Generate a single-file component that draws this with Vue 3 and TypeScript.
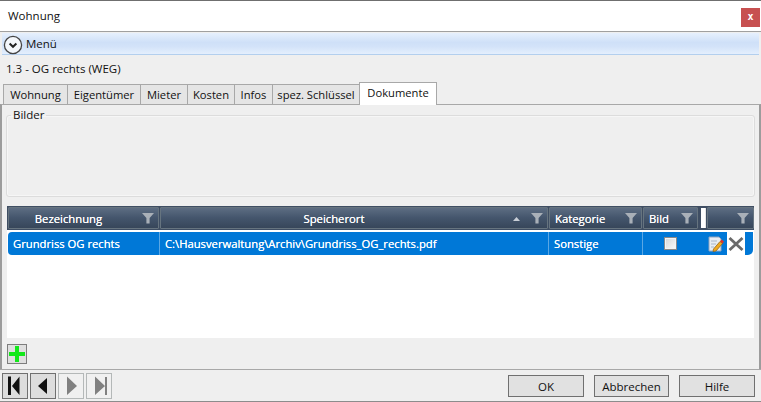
<script setup lang="ts">
const tabs: string[] = ['Wohnung', 'Eigentümer', 'Mieter', 'Kosten', 'Infos', 'spez. Schlüssel']
const tabWidths: number[] = [65, 74, 48, 48, 39, 88]
interface Col { label: string; width: number; pad: number; sort?: boolean }
const cols: Col[] = [
  { label: 'Bezeichnung', width: 151, pad: 30 },
  { label: 'Speicherort', width: 388, pad: 40, sort: true },
  { label: 'Kategorie', width: 93, pad: 0 },
  { label: 'Bild', width: 55, pad: 0 },
]
</script>

<template>
  <div class="win">
    <div class="title">
      <span>Wohnung</span>
      <div class="close">x</div>
    </div>
    <div class="body">
      <div class="menu">
        <svg class="chev" width="20" height="20" viewBox="0 0 20 20">
          <circle cx="10" cy="10" r="8.6" fill="#f4f7fb" stroke="#444" stroke-width="1.3" />
          <path d="M6.6 8.6 L10 11.8 L13.4 8.6" fill="none" stroke="#222" stroke-width="2" />
        </svg>
        <span>Menü</span>
      </div>
      <div class="sub">1.3 - OG rechts (WEG)</div>
      <div class="tabs">
        <div v-for="(t, i) in tabs" :key="t" class="tab" :style="{ width: tabWidths[i] + 'px' }">{{ t }}</div>
        <div class="tab active">Dokumente</div>
      </div>
      <div class="panel">
        <fieldset class="group">
          <legend>Bilder</legend>
        </fieldset>
        <div class="grid">
          <div class="head">
            <div v-for="c in cols" :key="c.label" class="hcell" :class="{ center: c.pad > 0 }" :style="{ width: c.width + 'px', paddingRight: c.pad + 'px' }">
              <span class="hlabel">{{ c.label }}</span>
              <svg v-if="c.sort" class="sort" width="7" height="4" viewBox="0 0 7 4"><path d="M3.5 0 L7 4 H0 Z" fill="#c8ced6" /></svg>
              <svg class="funnel" width="12" height="12" viewBox="0 0 12 12"><path d="M0 1 H12 L7.6 6 V11.5 H4.4 V6 Z" fill="#a9b0b8" /></svg>
            </div>
            <div class="split"></div>
            <div class="hcell last">
              <svg class="funnel" width="12" height="12" viewBox="0 0 12 12"><path d="M0 1 H12 L7.6 6 V11.5 H4.4 V6 Z" fill="#a9b0b8" /></svg>
            </div>
          </div>
          <div class="row">
            <div class="cell c1">Grundriss OG rechts</div>
            <div class="cell c2">C:\Hausverwaltung\Archiv\Grundriss_OG_rechts.pdf</div>
            <div class="cell c3">Sonstige</div>
            <div class="cell c4"><span class="check"></span></div>
            <div class="c5">
              <svg class="edit" width="18" height="18" viewBox="0 0 18 18">
                <path d="M2 2 H12 L14 4 V16 H2 Z" fill="#e8edf4" stroke="#8fa3bd" />
                <path d="M4 6 H10 M4 9 H9 M4 12 H7" stroke="#a9b8cb" />
                <path d="M6.5 14 L13 6.5 L15.5 8.5 L9 16 L6 16.5 Z" fill="#efaa22" stroke="#8a5a0c" stroke-width=".7" />
                <path d="M13 6.5 L14.5 4.5 L17 6.5 L15.5 8.5 Z" fill="#d9342b" />
              </svg>
              <div class="del">
                <svg width="18" height="18" viewBox="0 0 18 18"><path d="M2.5 3 L15.5 15 M15.5 3 L2.5 15" stroke="#6a6a6a" stroke-width="2.8" /></svg>
              </div>
            </div>
          </div>
          <div class="empty"></div>
        </div>
        <div class="addrow">
          <div class="add">
            <svg width="16" height="16" viewBox="0 0 16 16"><path d="M6 0 H10 V6 H16 V10 H10 V16 H6 V10 H0 V6 H6 Z" fill="#12e81a" /></svg>
          </div>
        </div>
      </div>
      <div class="foot">
        <div class="nav">
          <div class="nb">
            <svg width="20" height="20" viewBox="0 0 20 20"><path d="M3 0.5 H6 V19 H3 Z M14.5 0.5 V19 L7 10 Z" fill="#111" /></svg>
          </div>
          <div class="nb">
            <svg width="20" height="20" viewBox="0 0 20 20"><path d="M14 2 V18 L5 10 Z" fill="#111" /></svg>
          </div>
          <div class="nb off">
            <svg width="20" height="20" viewBox="0 0 20 20"><path d="M6 0.5 V19 L16 10 Z" fill="#808080" /></svg>
          </div>
          <div class="nb off">
            <svg width="20" height="20" viewBox="0 0 20 20"><path d="M6 0.5 V19 L16 10 Z M16 1 H18 V19 H16 Z" fill="#808080" /></svg>
          </div>
        </div>
        <div class="btns">
          <div class="btn b1">OK</div>
          <div class="btn b2">Abbrechen</div>
          <div class="btn b3">Hilfe</div>
        </div>
      </div>
    </div>
  </div>
</template>

<style>
html, body { margin: 0; padding: 0; background: #fff; overflow: hidden; }
</style>

<style scoped>
.win {
  width: 761px; height: 402px; box-sizing: border-box;
  border-top: 1px solid #6f6f6f;
  display: flex; flex-direction: column;
  font-family: "Open Sans", "Noto Sans", sans-serif; font-size: 11.5px; color: #111;
  background: #fff; overflow: hidden;
}
.title { height: 30px; flex: none; display: flex; align-items: center; justify-content: space-between; padding: 0 1px 2px 8px; box-sizing: border-box; }
.close {
  width: 19px; height: 19px; align-self: flex-start; margin-top: 7px; background: #c75050; color: #fff;
  font: bold 10px "DejaVu Sans Mono", monospace; display: flex; align-items: center; justify-content: center;
  box-sizing: border-box; padding-bottom: 2px;
}
.body {
  flex: 1; min-height: 0; display: flex; flex-direction: column; background: #efefef;
  border-top: 1px solid #a0a0a0; border-bottom: 1px solid #8c8c8c;
}
.menu {
  height: 21px; flex: none; margin: 1px 2px 0 2px;
  background: linear-gradient(#e6f0fd, #cfe0f8 45%, #d3e3f9 65%, #e4effd);
  border-bottom: 1px solid #b3cfee; display: flex; align-items: center; gap: 3px; padding-left: 1px;
}
.chev { margin-top: 2px; flex: none; }
.sub { height: 27px; flex: none; display: flex; align-items: center; padding-left: 6px; box-sizing: border-box; }
.tabs { height: 22px; flex: none; display: flex; padding-left: 3px; box-sizing: border-box; font-size: 11.2px; }
.tab {
  margin-top: 2px; height: 20px; box-sizing: border-box;
  background: #e5e5e5; border: 1px solid #a8a8a8; border-bottom: 0;
  display: flex; align-items: center; justify-content: center; white-space: nowrap;
  margin-left: -1px;
}
.tab:first-child { margin-left: 0; }
.tab.active {
  margin-top: 0; height: 23px; width: 78px; background: #fff; position: relative; z-index: 1; padding-bottom: 3px;
}
.panel {
  flex: none; height: 265px; box-sizing: border-box; display: flex; flex-direction: column;
  border-top: 1px solid #a8a8a8; border-left: 2px solid #9c9c9c; border-right: 2px solid #9c9c9c;
  padding: 0 5px 0 5px;
}
.group {
  height: 89px; flex: none; margin: 3px -1px 0 -1px; padding: 0; box-sizing: border-box;
  border: 1px solid #dcdcdc; border-radius: 3px; box-shadow: inset 0 0 0 1px #f6f6f6;
}
.group legend { margin-left: 4px; padding: 0 2px; line-height: 14px; }
.grid { height: 132px; flex: none; margin-top: 9px; background: #fff; display: flex; flex-direction: column; }
.head { height: 24px; flex: none; display: flex; background: #3f4e63; padding-left: 1px; box-sizing: border-box; }
.hcell {
  height: 22px; margin-top: 1px; box-sizing: border-box; flex: none; margin-right: 1px;
  background: linear-gradient(#5d6d82, #44556c 50%, #37465a);
  border: 1px solid #66747f; border-radius: 1px;
  color: #fff; display: flex; align-items: center; position: relative; padding-left: 5px; font-size: 11.3px;
}
.hcell.center { justify-content: center; padding-left: 0; }
.hlabel { text-shadow: 0 0 .6px #fff; }
.hcell.last { width: 47px; margin-left: 1px; margin-right: 0; }
.funnel { position: absolute; right: 4px; top: 4px; }
.sort { position: absolute; right: 27px; top: 9px; }
.split { width: 5px; margin-left: 2px; background: linear-gradient(90deg, #fff 0 4px, #e6e6e6 4px); height: 20px; margin-top: 2px; flex: none; }
.row { height: 23px; flex: none; display: flex; margin: 2px 1px 0 1px; background: #0078d7; color: #fff; border-radius: 4px 0 5px 4px; font-size: 11.25px; text-shadow: 0 0 .5px #fff; }
.cell { height: 100%; display: flex; align-items: center; box-sizing: border-box; padding-left: 5px; border-right: 1px solid #5aa7e4; flex: none; }
.c1 { width: 152px; }
.c2 { width: 389px; }
.c3 { width: 94px; }
.c4 { width: 57px; justify-content: center; padding: 0 2px 0 0; border-right: 0; }
.check { width: 13px; height: 13px; box-sizing: border-box; border: 1px solid #8a8a8a; background: linear-gradient(135deg, #d6d6d6, #fbfbfb); box-shadow: inset 0 0 0 1px #f4f4f4; display: block; }
.c5 { margin-left: 7px; display: flex; align-items: center; }
.edit { flex: none; margin-right: 2px; }
.del { width: 18px; height: 23px; background: #fff; display: flex; align-items: center; justify-content: center; }
.empty { flex: 1; }
.addrow { flex: 1; display: flex; align-items: flex-start; padding-top: 6px; box-sizing: border-box; }
.add { width: 20px; height: 20px; box-sizing: border-box; border: 1px solid #7d7d7d; background: #dfdfdf; display: flex; align-items: center; justify-content: center; }
.foot { flex: 1; min-height: 0; display: flex; justify-content: space-between; border-top: 1px solid #a8a8a8; padding: 3px 6px 0 2px; }
.nav { display: flex; gap: 2px; height: 26px; }
.nb { width: 26px; height: 26px; box-sizing: border-box; border: 1px solid #707070; background: #dddddd; display: flex; align-items: center; justify-content: center; }
.nb.off { background: #f0f0f0; border-color: #b4b8b8; }
.btns { display: flex; padding-top: 2px; }
.btn { height: 22px; box-sizing: border-box; border: 1px solid #707070; background: #e1e1e1; display: flex; align-items: center; justify-content: center; }
.b1 { width: 76px; }
.b2 { width: 75px; margin-left: 10px; }
.b3 { width: 76px; margin-left: 10px; }
</style>
